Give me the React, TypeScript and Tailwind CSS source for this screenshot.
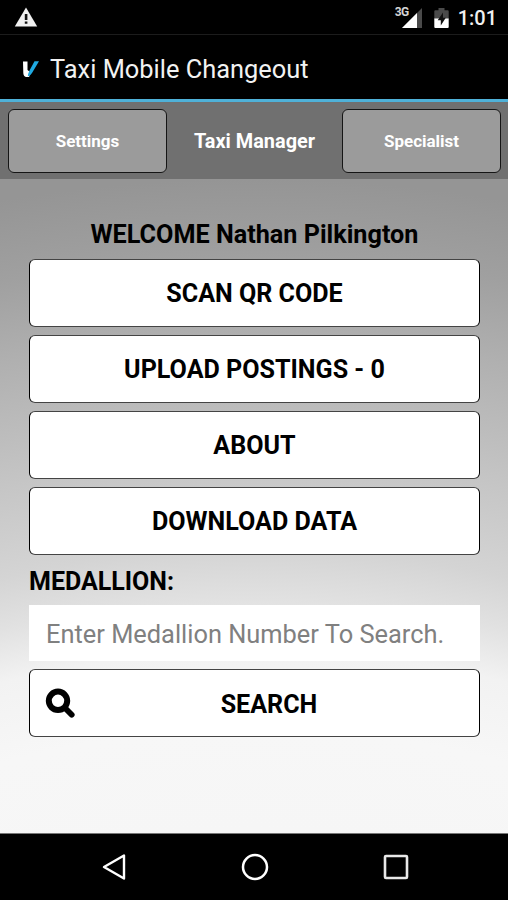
import type { ReactNode } from "react";

function StatusBar() {
  return (
    <div className="flex h-[35px] items-center justify-between border-b border-[#1c1c1c] pl-[14px] pr-[11px]">
      <svg className="h-5 w-6" viewBox="0 0 24 20">
        <path d="M12 0.5 L23.2 19.5 H0.8 Z" fill="#f0f0f0" />
        <path d="M10.8 7 h2.6 v6 h-2.6z M10.8 14.6 h2.6 v2.2 h-2.6z" fill="#111" />
      </svg>
      <div className="flex items-center pt-px">
        <span className="-mr-[7px] -mt-[11px] text-[12px] font-bold leading-none tracking-tighter text-[#d5d5d5]">3G</span>
        <svg className="h-5 w-5" viewBox="0 0 20 20">
          <path d="M20 0 V20 H0 Z" fill="#4a4a4a" />
          <path d="M15 5 V20 H0 Z" fill="#fff" />
        </svg>
        <svg className="ml-3 h-5 w-[15px]" viewBox="0 0 15 20">
          <path d="M4.5 0 h6 v2.3 h3.2 a1 1 0 0 1 1 1 V11 H0.3 V3.3 a1 1 0 0 1 1-1 H4.5z" fill="#4a4a4a" />
          <path d="M0.3 10.5 H14.7 V19 a1 1 0 0 1-1 1 H1.3 a1 1 0 0 1-1-1z" fill="#fff" />
          <path d="M9 4.5 L3.7 12.2 H6.8 V17.5 L11.8 9.8 H9 Z" fill="#111" />
        </svg>
        <span className="ml-[9px] pt-px text-[20px] font-medium leading-none text-[#f0f0f0]">1:01</span>
      </div>
    </div>
  );
}

function TitleBar() {
  return (
    <header className="flex h-[67px] items-center border-b-[3px] border-[#4fb1d8] pl-[23px] pt-[3px] text-[#f2f2f2]">
      <svg className="h-4 w-4" viewBox="0 0 16 16">
        <path d="M0 0.5 H4.5 V9 L7 11 L6.2 16 H3 Q0.5 15.5 0.3 12 Z" fill="#fff" />
        <path d="M11.5 0.3 H16 L9 12 Q7.5 14.8 4.8 15.5 Q4.8 13 6.5 9.5 Z" fill="#1fa9e1" />
      </svg>
      <h1 className="ml-[11px] pt-0.5 text-[25.4px] leading-none">Taxi Mobile Changeout</h1>
    </header>
  );
}

function TabButton({ children }: { children: ReactNode }) {
  return (
    <button className="h-16 w-[159px] rounded-md border-[1.5px] border-[#151515] bg-[#9b9b9b] pt-0.5 text-[17px] font-bold text-white">
      {children}
    </button>
  );
}

function MenuButton({ children, icon }: { children: ReactNode; icon?: ReactNode }) {
  return (
    <button
      className={`relative flex h-[68px] w-full items-center justify-center rounded-md border border-x-[1.5px] border-black border-y-[#444] bg-white text-[25.1px] font-bold leading-none text-black ${icon ? "pl-[29px] pt-[3px]" : "pt-0.5"}`}
    >
      {icon}
      {children}
    </button>
  );
}

export default function App() {
  return (
    <div className="flex h-[900px] w-[508px] flex-col overflow-hidden bg-black font-['Roboto',sans-serif]">
      <StatusBar />
      <TitleBar />

      <nav className="flex h-[77px] items-center justify-between bg-[#707070] pl-2 pr-[7px] text-white">
        <TabButton>Settings</TabButton>
        <span className="pt-0.5 text-[19.9px] font-bold">Taxi Manager</span>
        <TabButton>Specialist</TabButton>
      </nav>

      <main className="flex h-[654px] flex-col bg-[radial-gradient(circle_at_254px_1500px,#f6f6f6_847px,#f7f7f7_950px,#f2f2f2_1028px,#e1e1e1_1080px,#d4d4d4_1130px,#c6c6c6_1215px,#b0b0b0_1340px,#a0a0a0_1420px,#959595_1500px)] pl-[29px] pr-7 text-black">
        <h2 className="mt-[41px] h-[39px] text-center text-[25.2px] font-bold leading-[30px]">
          WELCOME Nathan Pilkington
        </h2>

        <div className="flex flex-col gap-2">
          <MenuButton>SCAN QR CODE</MenuButton>
          <MenuButton>UPLOAD POSTINGS - 0</MenuButton>
          <MenuButton>ABOUT</MenuButton>
          <MenuButton>DOWNLOAD DATA</MenuButton>
        </div>

        <label htmlFor="medallion" className="mt-3 text-[25px] font-bold leading-[30px]">
          MEDALLION:
        </label>
        <input
          id="medallion"
          placeholder="Enter Medallion Number To Search."
          className="mb-2 mt-2 h-14 w-full bg-white px-[17px] pt-px text-[25.4px] placeholder:text-[#808080]"
        />
        <MenuButton
          icon={
            <svg className="absolute left-[15px] top-[18px] h-[30px] w-[30px]" viewBox="0 0 30 30" fill="none" stroke="#000">
              <circle cx="13" cy="12.8" r="9.2" strokeWidth="6" />
              <path d="M20 20 L26.7 26.7" strokeWidth="5.8" strokeLinecap="round" />
            </svg>
          }
        >
          SEARCH
        </MenuButton>
      </main>

      <footer className="flex h-[67px] items-center justify-between border-t border-[#777] pl-[102px] pr-[99px]">
        <svg className="h-7 w-6" viewBox="0 0 24 28" fill="none" stroke="#fff" strokeWidth="2.4" strokeLinejoin="round">
          <path d="M22 2.5 V25.5 L2 14 Z" />
        </svg>
        <svg className="h-7 w-7" viewBox="0 0 28 28" fill="none" stroke="#fff" strokeWidth="2.5">
          <circle cx="14" cy="14" r="12" />
        </svg>
        <svg className="h-[26px] w-[26px]" viewBox="0 0 26 26" fill="none" stroke="#e8e8e8" strokeWidth="2.6">
          <rect x="2" y="2" width="22" height="22" rx="1" />
        </svg>
      </footer>
    </div>
  );
}
